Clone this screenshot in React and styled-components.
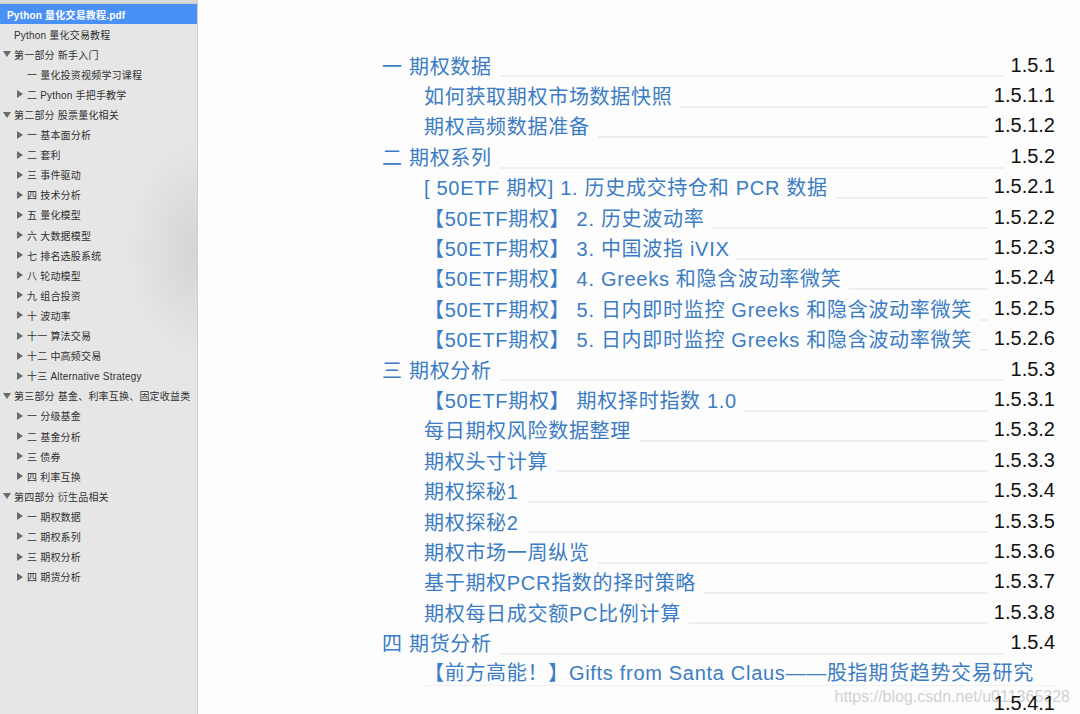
import { createGlobalStyle, styled } from "styled-components";

const GlobalStyle = createGlobalStyle`
  html, body {
    margin: 0;
    padding: 0;
    height: 100%;
  }
  body {
    font-family: "Liberation Sans", "Noto Sans CJK SC", sans-serif;
    background: #fdfdfd;
    overflow: hidden;
  }
  #root {
    height: 100%;
  }
`;

const sidebarItems = [
  { text: "Python 量化交易教程.pdf", level: 0, selected: true },
  { text: "Python 量化交易教程", level: 1 },
  { text: "第一部分 新手入门", level: 1, arrow: "down" },
  { text: "一 量化投资视频学习课程", level: 2 },
  { text: "二 Python 手把手教学", level: 2, arrow: "right" },
  { text: "第二部分 股票量化相关", level: 1, arrow: "down" },
  { text: "一 基本面分析", level: 2, arrow: "right" },
  { text: "二 套利", level: 2, arrow: "right" },
  { text: "三 事件驱动", level: 2, arrow: "right" },
  { text: "四 技术分析", level: 2, arrow: "right" },
  { text: "五 量化模型", level: 2, arrow: "right" },
  { text: "六 大数据模型", level: 2, arrow: "right" },
  { text: "七 排名选股系统", level: 2, arrow: "right" },
  { text: "八 轮动模型", level: 2, arrow: "right" },
  { text: "九 组合投资", level: 2, arrow: "right" },
  { text: "十 波动率", level: 2, arrow: "right" },
  { text: "十一 算法交易", level: 2, arrow: "right" },
  { text: "十二 中高频交易", level: 2, arrow: "right" },
  { text: "十三 Alternative Strategy", level: 2, arrow: "right" },
  { text: "第三部分 基金、利率互换、固定收益类", level: 1, arrow: "down" },
  { text: "一 分级基金", level: 2, arrow: "right" },
  { text: "二 基金分析", level: 2, arrow: "right" },
  { text: "三 债券", level: 2, arrow: "right" },
  { text: "四 利率互换", level: 2, arrow: "right" },
  { text: "第四部分 衍生品相关", level: 1, arrow: "down" },
  { text: "一 期权数据", level: 2, arrow: "right" },
  { text: "二 期权系列", level: 2, arrow: "right" },
  { text: "三 期权分析", level: 2, arrow: "right" },
  { text: "四 期货分析", level: 2, arrow: "right" },
];

const tocRows = [
  { title: "一 期权数据", num: "1.5.1", level: 1 },
  { title: "如何获取期权市场数据快照", num: "1.5.1.1", level: 2 },
  { title: "期权高频数据准备", num: "1.5.1.2", level: 2 },
  { title: "二 期权系列", num: "1.5.2", level: 1 },
  { title: "[ 50ETF 期权] 1. 历史成交持仓和 PCR 数据", num: "1.5.2.1", level: 2 },
  { title: "【50ETF期权】 2. 历史波动率", num: "1.5.2.2", level: 2 },
  { title: "【50ETF期权】 3. 中国波指 iVIX", num: "1.5.2.3", level: 2 },
  { title: "【50ETF期权】 4. Greeks 和隐含波动率微笑", num: "1.5.2.4", level: 2 },
  { title: "【50ETF期权】 5. 日内即时监控 Greeks 和隐含波动率微笑", num: "1.5.2.5", level: 2 },
  { title: "【50ETF期权】 5. 日内即时监控 Greeks 和隐含波动率微笑", num: "1.5.2.6", level: 2 },
  { title: "三 期权分析", num: "1.5.3", level: 1 },
  { title: "【50ETF期权】 期权择时指数 1.0", num: "1.5.3.1", level: 2 },
  { title: "每日期权风险数据整理", num: "1.5.3.2", level: 2 },
  { title: "期权头寸计算", num: "1.5.3.3", level: 2 },
  { title: "期权探秘1", num: "1.5.3.4", level: 2 },
  { title: "期权探秘2", num: "1.5.3.5", level: 2 },
  { title: "期权市场一周纵览", num: "1.5.3.6", level: 2 },
  { title: "基于期权PCR指数的择时策略", num: "1.5.3.7", level: 2 },
  { title: "期权每日成交额PC比例计算", num: "1.5.3.8", level: 2 },
  { title: "四 期货分析", num: "1.5.4", level: 1 },
  {
    title: "【前方高能！】Gifts from Santa Claus——股指期货趋势交易研究",
    num: "1.5.4.1",
    level: 2,
    wrapped: true,
  },
];

const Arrow = ({ dir }) => (
  <ArrowBox>
    <svg width="8" height="8" viewBox="0 0 8 8">
      {dir === "down" ? (
        <polygon points="0,1 8,1 4,7" fill="#6a6a6a" />
      ) : (
        <polygon points="1,0 7,4 1,8" fill="#6a6a6a" />
      )}
    </svg>
  </ArrowBox>
);

const TocRow = ({ row }) => {
  if (row.wrapped) {
    return (
      <>
        <Row $level={row.level}>
          <WrappedTitle>{row.title}</WrappedTitle>
        </Row>
        <Row $level={row.level}>
          <Leader $level={row.level} $blank />
          <PageNum>{row.num}</PageNum>
        </Row>
      </>
    );
  }
  return (
    <Row $level={row.level}>
      <Title>{row.title}</Title>
      <Leader $level={row.level} />
      <PageNum>{row.num}</PageNum>
    </Row>
  );
};

export default function App() {
  return (
    <>
      <GlobalStyle />
      <Layout>
        <Sidebar>
          <TopStrip />
          {sidebarItems.map((item, i) => (
            <SideItem key={i} $level={item.level} $selected={item.selected} $hasArrow={!!item.arrow}>
              {item.arrow && <Arrow dir={item.arrow} />}
              <span>{item.text}</span>
            </SideItem>
          ))}
        </Sidebar>
        <Main>
          <Toc>
            {tocRows.map((row, i) => (
              <TocRow key={i} row={row} />
            ))}
          </Toc>
          <Watermark>https://blog.csdn.net/u011365328</Watermark>
        </Main>
      </Layout>
    </>
  );
}

const Layout = styled.div`
  display: flex;
  height: 714px;
  width: 1080px;
  overflow: hidden;
`;

const Sidebar = styled.aside`
  width: 197px;
  flex: none;
  background:
    radial-gradient(ellipse 70px 110px at 100% 250px, rgba(120, 120, 110, 0.16), rgba(0, 0, 0, 0) 100%),
    #e6e6e6;
  border-right: 1px solid #cfcfcf;
  font-family: "Liberation Sans", "Noto Sans CJK SC", sans-serif;
  font-size: 10px;
  color: #303030;
`;

const TopStrip = styled.div`
  height: 4px;
  background: #d9d9d9;
  border-bottom: 1px solid #cdcdcd;
  box-sizing: border-box;
`;

const SideItem = styled.div`
  display: flex;
  align-items: center;
  height: 20.1px;
  white-space: nowrap;
  letter-spacing: 0.2px;
  padding-left: ${(p) =>
    p.$level === 0 ? "7px" : p.$level === 1 ? (p.$hasArrow ? "3px" : "14px") : p.$hasArrow ? "16px" : "27px"};
  background: ${(p) => (p.$selected ? "#4a91f6" : "transparent")};
  color: ${(p) => (p.$selected ? "#ffffff" : "#303030")};
  font-weight: ${(p) => (p.$selected ? "bold" : "normal")};
`;

const ArrowBox = styled.span`
  display: flex;
  width: 11px;
  flex: none;
`;

const Main = styled.main`
  position: relative;
  flex: 1;
  background: #fdfdfd;
  padding: 50px 25px 0 184px;
`;

const Toc = styled.div`
  display: flex;
  flex-direction: column;
`;

const Row = styled.div`
  display: flex;
  align-items: center;
  height: 30.4px;
  padding-left: ${(p) => (p.$level === 2 ? "42px" : "0")};
`;

const Title = styled.span`
  flex: none;
  white-space: nowrap;
  color: #3b7cc4;
  font-size: 20px;
  letter-spacing: 0.7px;
  font-family: "Liberation Sans", "Noto Sans CJK SC", sans-serif;
`;

const WrappedTitle = styled(Title)`
  align-self: stretch;
  display: flex;
  align-items: center;
  flex: 1;
  border-bottom: 1px solid #f0f0f0;
  margin-bottom: 2px;
`;

const Leader = styled.span`
  flex: 1;
  align-self: flex-end;
  margin: 0 ${(p) => (p.$level === 1 ? "7px" : "6px")} 3px ${(p) => (p.$blank ? "0" : "8px")};
  border-bottom: 2px solid #efefef;
`;

const PageNum = styled.span`
  position: relative;
  z-index: 1;
  flex: none;
  color: #111111;
  font-size: 20px;
  font-family: "Liberation Sans", Arial, sans-serif;
`;

const Watermark = styled.div`
  position: absolute;
  right: 10px;
  bottom: 8px;
  font-size: 16px;
  color: rgba(170, 170, 170, 0.55);
  font-family: "Liberation Sans", Arial, sans-serif;
  pointer-events: none;
`;
